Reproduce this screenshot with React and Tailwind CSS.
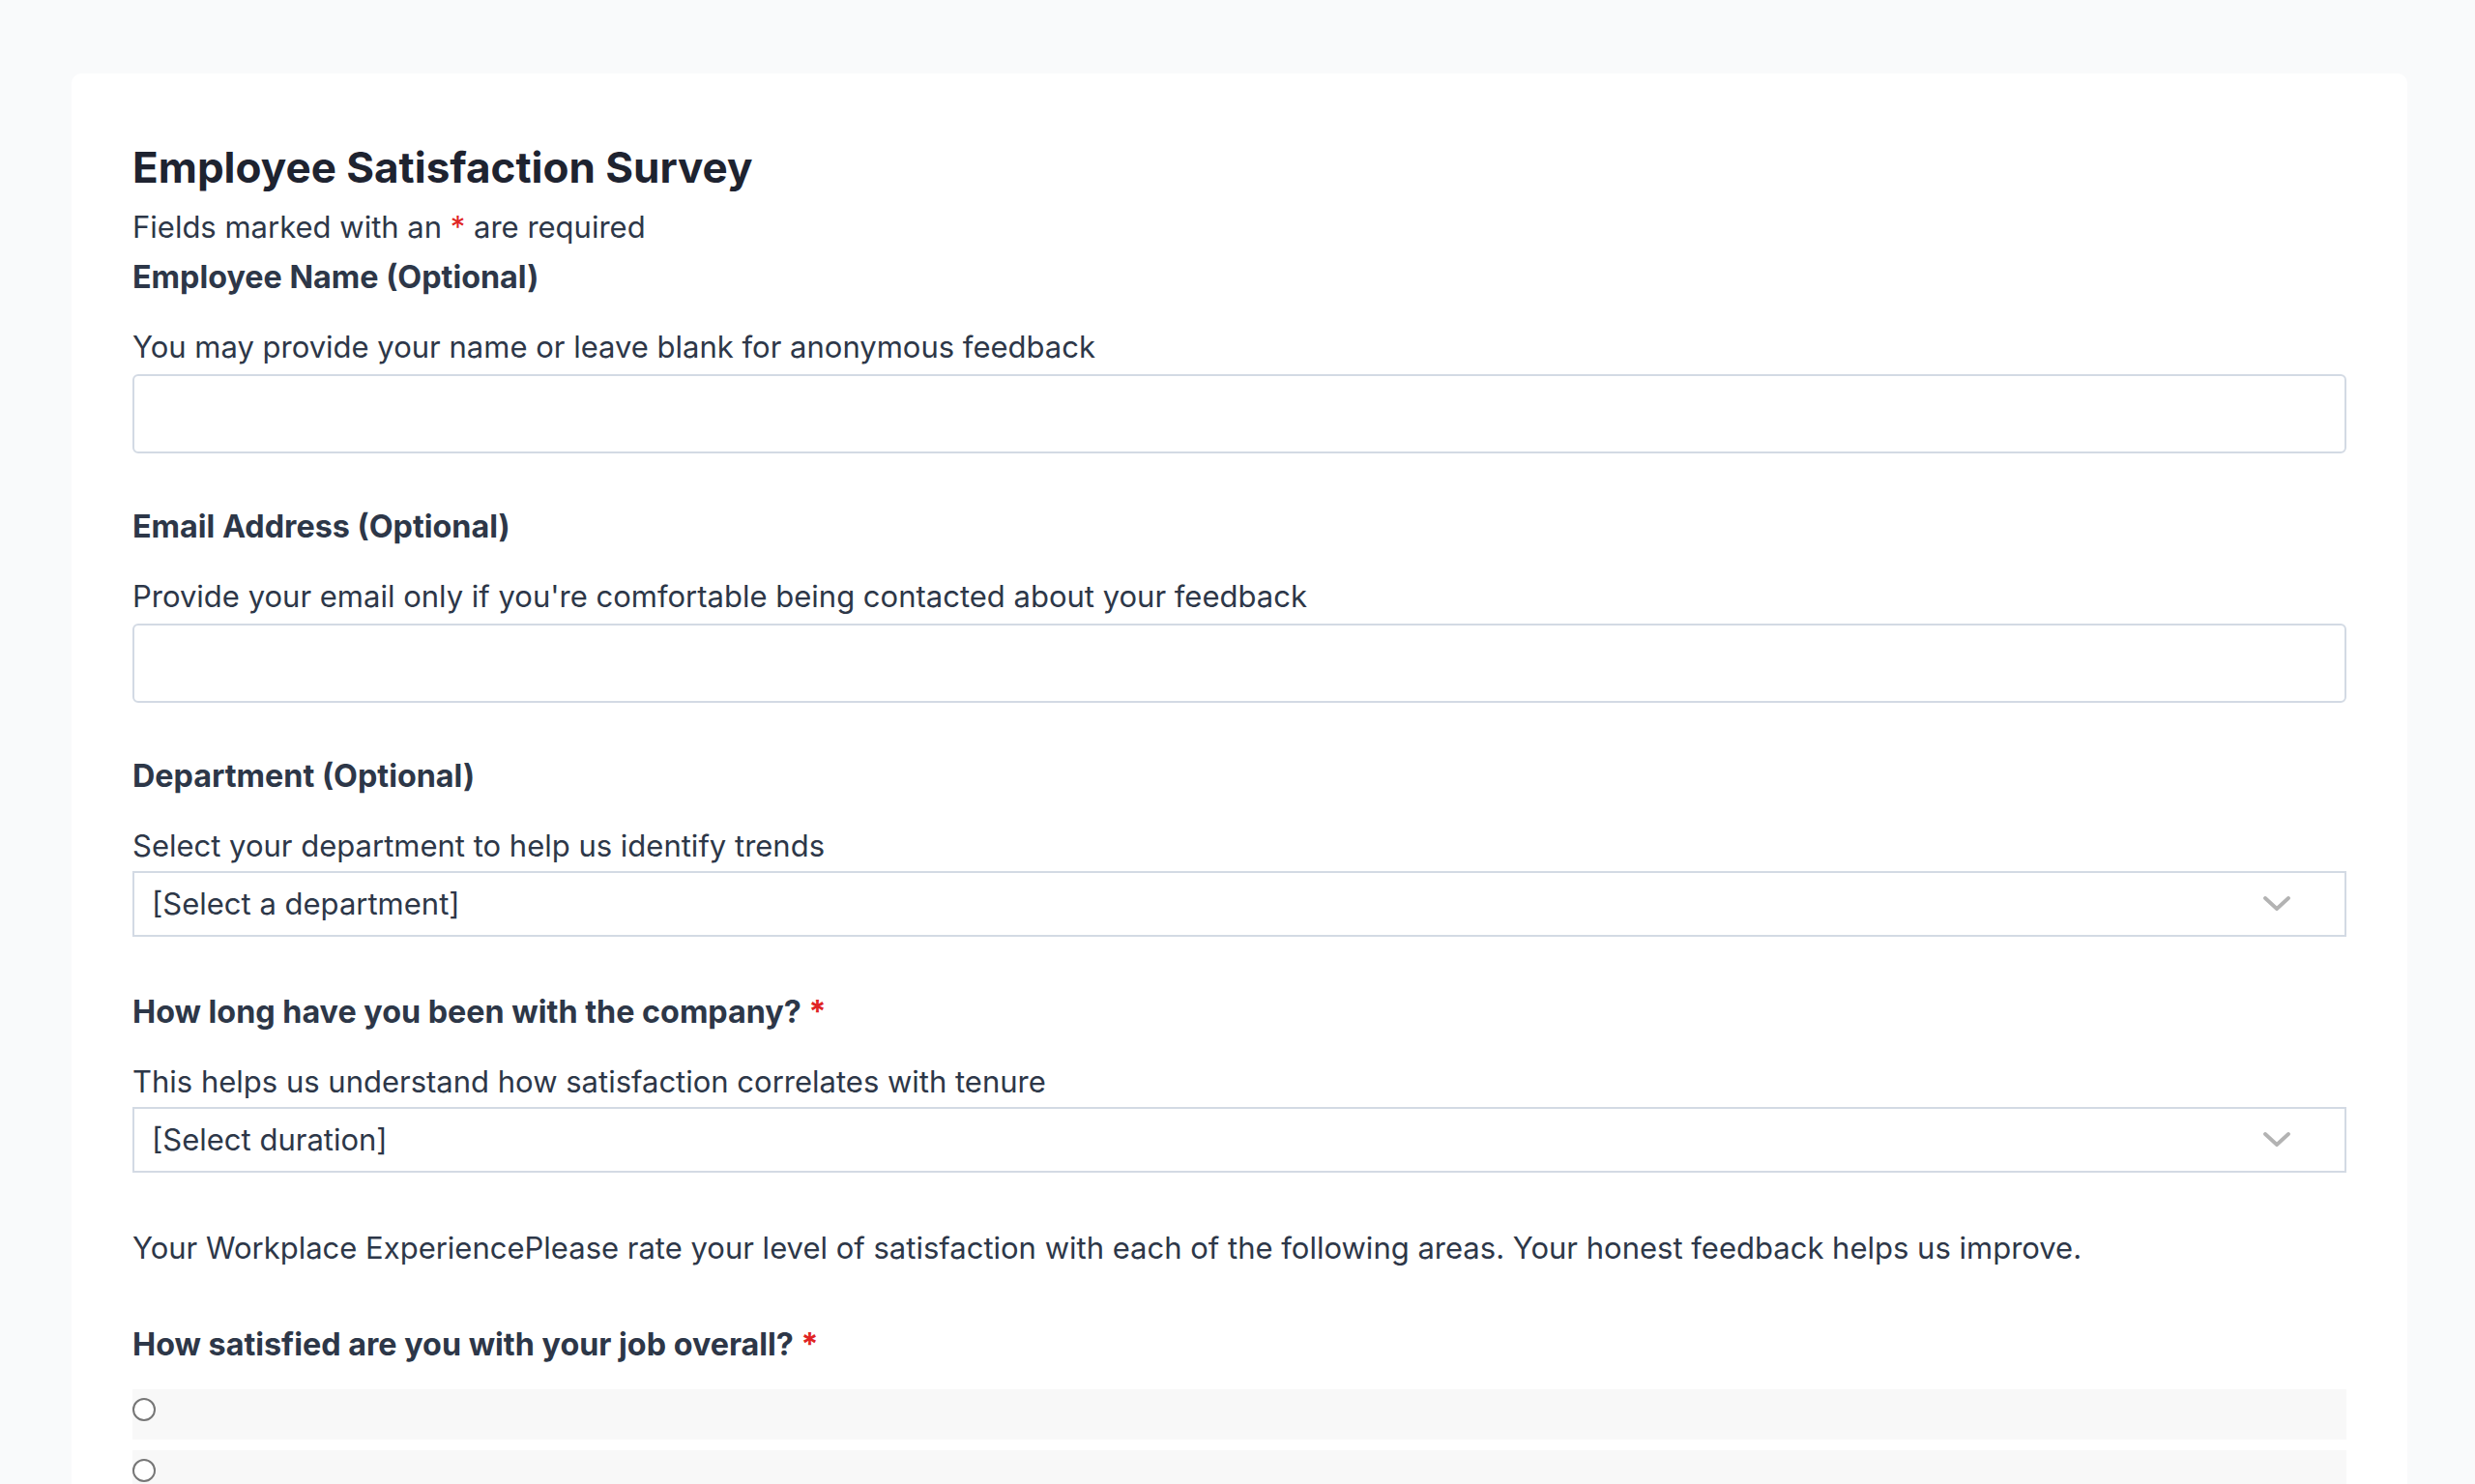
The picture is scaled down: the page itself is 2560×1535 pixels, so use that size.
import React from "react";

function Chevron() {
  return (
    <svg width="28" height="16" viewBox="0 0 28 16" fill="none" className="shrink-0">
      <polyline points="2,2 14,13 26,2" stroke="#b3b3b3" strokeWidth="3.8" strokeLinecap="round" strokeLinejoin="round" />
    </svg>
  );
}

function Req() {
  return <span className="text-[#e02424]"> *</span>;
}

function TextField({ label, desc }) {
  return (
    <div className="mb-[58px]">
      <div className="text-[32.3px] leading-[36px] font-bold text-[#2d3748]">{label}</div>
      <div className="mt-[36px] text-[31px] leading-[36px] text-[#2d3748]">{desc}</div>
      <div className="mt-[10px] h-[82px] rounded-[6px] border-2 border-[#d3dae4] bg-white"></div>
    </div>
  );
}

function SelectField({ label, desc, placeholder, required }) {
  return (
    <div className="mb-[60px]">
      <div className="text-[32.3px] leading-[36px] font-bold text-[#2d3748]">
        {label}
        {required && <Req />}
      </div>
      <div className="mt-[36px] text-[31px] leading-[36px] text-[#2d3748]">{desc}</div>
      <div className="mt-[8px] h-[68px] border-2 border-[#d3dae4] bg-white flex items-center justify-between pl-[18px] pr-[56px]">
        <span className="text-[31px] leading-[36px] text-[#2d3748]">{placeholder}</span>
        <Chevron />
      </div>
    </div>
  );
}

export default function App() {
  return (
    <div
      className="min-h-screen bg-[#f9fafb] pt-[76px] pl-[74px] pr-[70px]"
      style={{ fontFamily: "Inter, 'Noto Sans', sans-serif" }}
    >
      <div className="bg-white rounded-[10px] px-[63px] pt-[71px] pb-[64px]">
        <h1 className="text-[44px] leading-[52px] font-bold text-[#1e2330]">
          Employee Satisfaction Survey
        </h1>
        <p className="mt-[18px] text-[31px] leading-[36px] text-[#2d3748]">
          Fields marked with an <span className="text-[#e02424]">*</span> are required
        </p>
        <div className="mt-[16px]">
          <TextField
            label="Employee Name (Optional)"
            desc="You may provide your name or leave blank for anonymous feedback"
          />
          <TextField
            label="Email Address (Optional)"
            desc="Provide your email only if you're comfortable being contacted about your feedback"
          />
          <SelectField
            label="Department (Optional)"
            desc="Select your department to help us identify trends"
            placeholder="[Select a department]"
          />
          <SelectField
            label="How long have you been with the company?"
            desc="This helps us understand how satisfaction correlates with tenure"
            placeholder="[Select duration]"
            required
          />
        </div>
        <p className="text-[31px] leading-[36px] text-[#2d3748]">
          Your Workplace ExperiencePlease rate your level of satisfaction with each of the following areas. Your honest feedback helps us improve.
        </p>
        <div className="mt-[64px] text-[32.3px] leading-[36px] font-bold text-[#2d3748]">
          How satisfied are you with your job overall?
          <Req />
        </div>
        <div className="mt-[28px] flex flex-col gap-[11px]">
          {[0, 1, 2, 3, 4].map((i) => (
            <div key={i} className="h-[52px] bg-[#f8f8f8] flex items-start pt-[9px]">
              <span className="w-[24px] h-[24px] rounded-full border-2 border-[#767676] bg-white shrink-0"></span>
            </div>
          ))}
        </div>
      </div>
    </div>
  );
}
